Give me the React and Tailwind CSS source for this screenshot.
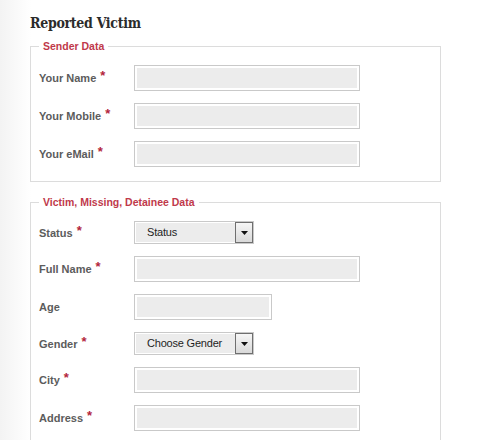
import React from 'react'

const Star = () => (
  <span className="ml-[4px] text-[13px] font-bold text-[#b3263c] relative -top-[2px]">*</span>
)

const TextInput = ({ width = 'w-[226px]' }) => (
  <div className={`${width} h-[26px] border border-[#c9c9c9] bg-[#ececec] shadow-[inset_0_0_0_2px_#fff]`} />
)

const Select = ({ value }) => (
  <div className="w-[120px] h-[23px] flex border border-[#c9c9c9] bg-[#ececec] shadow-[inset_0_0_0_1px_#fff]">
    <div className="flex-1 flex items-center pl-[12px] text-[11px] tracking-[-0.2px] text-[#1e1e1e] whitespace-nowrap overflow-hidden">{value}</div>
    <div className="w-[18px] h-full border border-[#6f6f6f] bg-[linear-gradient(#f6f6f6,#d9d9d9)] flex items-center justify-center">
      <svg width="7" height="4" viewBox="0 0 7 4">
        <path d="M0 0h7L3.5 4z" fill="#111" />
      </svg>
    </div>
  </div>
)

const Row = ({ label, required, children }) => (
  <div className="flex items-center">
    <div className="w-[95px] text-[11px] font-bold text-[#5c5c5c]">
      {label}
      {required && <Star />}
    </div>
    {children}
  </div>
)

const Group = ({ title, children }) => (
  <fieldset className="w-[411px] border border-[#dcdcdc] pl-[8px] pb-[14px] pt-[13px]">
    <legend className="px-[4px] text-[10.5px] leading-[12px] font-bold text-[#c0394b]">{title}</legend>
    <div className="flex flex-col gap-[12px]">{children}</div>
  </fieldset>
)

const App = () => {
  return (
    <div className="min-h-[440px] bg-[linear-gradient(to_right,#f3f3f3,#ffffff_32px)] pl-[30px] pt-[13px] font-['Liberation_Sans',Arial,sans-serif]">
      <h2 className="font-['DejaVu_Serif',serif] font-extrabold font-stretch-condensed text-[14px] tracking-[-0.3px] leading-[20px] text-[#2b2b2b] mb-[7px]">
        Reported Victim
      </h2>

      <Group title="Sender Data">
        <Row label="Your Name" required><TextInput /></Row>
        <Row label="Your Mobile" required><TextInput /></Row>
        <Row label="Your eMail" required><TextInput /></Row>
      </Group>

      <div className="h-[14px]" />

      <Group title="Victim, Missing, Detainee Data">
        <Row label="Status" required><Select value="Status" /></Row>
        <Row label="Full Name" required><TextInput /></Row>
        <Row label="Age"><TextInput width="w-[138px]" /></Row>
        <Row label="Gender" required><Select value="Choose Gender" /></Row>
        <Row label="City" required><TextInput /></Row>
        <Row label="Address" required><TextInput /></Row>
      </Group>
    </div>
  )
}

export default App
